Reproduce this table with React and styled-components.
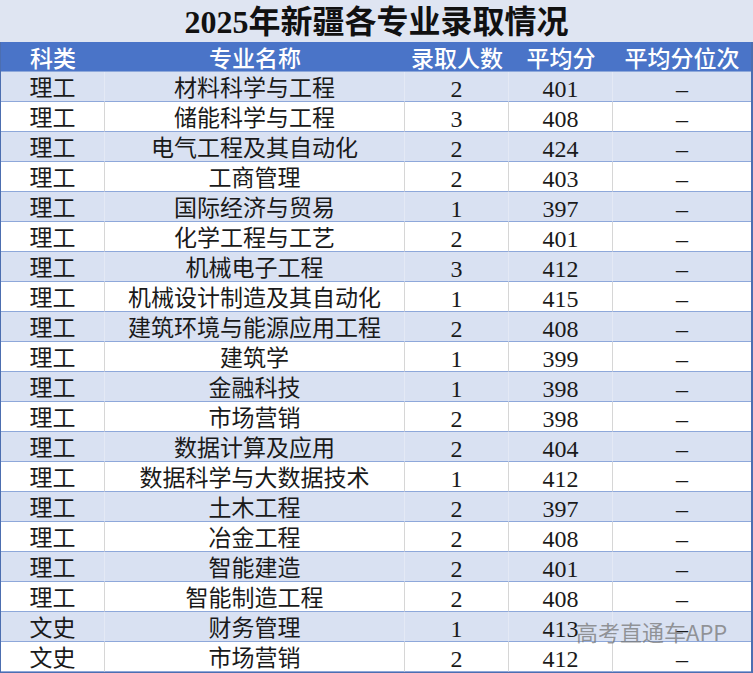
import React from "react";
import styled, { createGlobalStyle } from "styled-components";

const GlobalStyle = createGlobalStyle`
    html, body {
        margin: 0;
        padding: 0;
        background: #ffffff;
    }
    body {
        font-family: "Liberation Serif", "Noto Sans CJK SC", serif;
    }
`;

const Sheet = styled.div`
    position: relative;
    width: 753px;
    height: 673px;
    overflow: hidden;
    background: #ffffff;
`;

const Title = styled.div`
    height: 42px;
    line-height: 45px;
    background: #dfe5f2;
    text-align: center;
    font-size: 32px;
    font-weight: 700;
    color: #111;
    overflow: hidden;
`;

const Grid = styled.div`
    width: 750px;
    display: grid;
    grid-template-columns: 104px 300px 104px 104px 1fr;
    border-left: 1px solid #4c6eb0;
    border-right: 2px solid #4c6eb0;
    border-bottom: 1px solid #4c6eb0;
`;

const Th = styled.div`
    height: 29px;
    line-height: 30px;
    background: #4a74c8;
    color: #ffffff;
    text-align: center;
    font-family: "Noto Sans CJK SC", sans-serif;
    font-size: 23px;
    font-weight: 500;
    border-bottom: 1px solid #8ea8da;
`;

const Td = styled.div`
    height: 27px;
    padding-top: 2px;
    line-height: 30px;
    text-align: center;
    font-size: ${(p) => (p.$num ? "24px" : "23px")};
    color: #1a1a1a;
    background: ${(p) => (p.$alt ? "#d9e1f2" : "#ffffff")};
    border-bottom: 1px solid #8ea8da;
    border-right: ${(p) =>
        p.$last ? "none" : p.$alt ? "1px solid #e4e9f5" : "1px solid #d6d6d6"};
    white-space: nowrap;
    overflow: hidden;
`;

const Watermark = styled.div`
    position: absolute;
    left: 576px;
    top: 615px;
    font-family: "Noto Sans CJK SC", sans-serif;
    font-size: 22px;
    color: rgba(120, 120, 120, 0.75);
    pointer-events: none;
`;

const headers = ["科类", "专业名称", "录取人数", "平均分", "平均分位次"];

const rows = [
    ["理工", "材料科学与工程", 2, 401],
    ["理工", "储能科学与工程", 3, 408],
    ["理工", "电气工程及其自动化", 2, 424],
    ["理工", "工商管理", 2, 403],
    ["理工", "国际经济与贸易", 1, 397],
    ["理工", "化学工程与工艺", 2, 401],
    ["理工", "机械电子工程", 3, 412],
    ["理工", "机械设计制造及其自动化", 1, 415],
    ["理工", "建筑环境与能源应用工程", 2, 408],
    ["理工", "建筑学", 1, 399],
    ["理工", "金融科技", 1, 398],
    ["理工", "市场营销", 2, 398],
    ["理工", "数据计算及应用", 2, 404],
    ["理工", "数据科学与大数据技术", 1, 412],
    ["理工", "土木工程", 2, 397],
    ["理工", "冶金工程", 2, 408],
    ["理工", "智能建造", 2, 401],
    ["理工", "智能制造工程", 2, 408],
    ["文史", "财务管理", 1, 413],
    ["文史", "市场营销", 2, 412],
];

export default function App() {
    return (
        <>
            <GlobalStyle />
            <Sheet>
                <Title>2025年新疆各专业录取情况</Title>
                <Grid>
                    {headers.map((h) => (
                        <Th key={h}>{h}</Th>
                    ))}
                    {rows.map((r, i) => {
                        const alt = i % 2 === 0;
                        return (
                            <React.Fragment key={i}>
                                <Td $alt={alt}>{r[0]}</Td>
                                <Td $alt={alt}>{r[1]}</Td>
                                <Td $alt={alt} $num>{r[2]}</Td>
                                <Td $alt={alt} $num>{r[3]}</Td>
                                <Td $alt={alt} $num $last>–</Td>
                            </React.Fragment>
                        );
                    })}
                </Grid>
                <Watermark>高考直通车APP</Watermark>
            </Sheet>
        </>
    );
}
